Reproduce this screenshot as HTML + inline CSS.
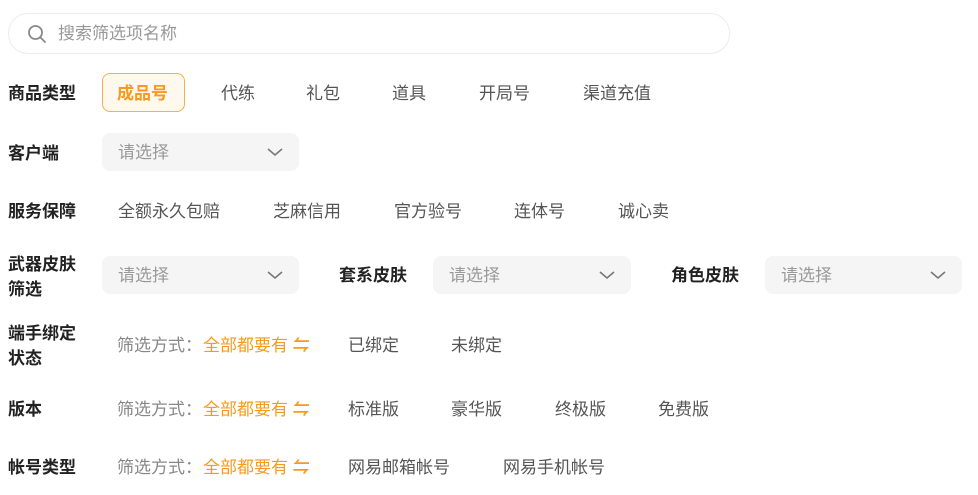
<!DOCTYPE html>
<html><head><meta charset="utf-8"><style>
body{margin:0;width:978px;height:495px;background:#fff;font-family:"Liberation Sans","Noto Sans CJK SC",sans-serif;font-size:17px;position:relative;overflow:hidden}
.a{position:absolute;white-space:nowrap;line-height:22px}
.l{font-weight:bold;color:#222}
.o{color:#555}
.p{color:#999}
.or{color:#f79a1e}
.or b{font-weight:bold}
.s{position:absolute;background:#f5f5f5;border-radius:8px;height:38px}
.s span{position:absolute;left:16px;top:9px;color:#999;line-height:22px}
.s svg{position:absolute;right:16px;top:13px}
</style></head><body>
<div style="position:absolute;left:8px;top:13px;width:720px;height:39px;border:1px solid #ececec;border-radius:20px"></div>
<svg style="position:absolute;left:27px;top:24px" width="20" height="20" viewBox="0 0 20 20"><circle cx="8.5" cy="8.5" r="6.5" fill="none" stroke="#888" stroke-width="1.8"/><path d="M13.5 13.5L18 18" stroke="#888" stroke-width="1.8" stroke-linecap="round"/></svg>
<div class="a p" style="left:58px;top:23px">搜索筛选项名称</div>

<div class="a l" style="left:8px;top:83px">商品类型</div>
<div style="position:absolute;left:102px;top:73px;width:81px;height:37px;border:1px solid #f5b04a;background:#fff8ef;border-radius:8px"></div>
<div class="a or" style="left:117px;top:83px;font-weight:bold">成品号</div>
<div class="a o" style="left:221px;top:83px">代练</div>
<div class="a o" style="left:306px;top:83px">礼包</div>
<div class="a o" style="left:392px;top:83px">道具</div>
<div class="a o" style="left:479px;top:83px">开局号</div>
<div class="a o" style="left:583px;top:83px">渠道充值</div>

<div class="a l" style="left:8px;top:143px">客户端</div>
<div class="s" style="left:102px;top:133px;width:197px"><span>请选择</span><svg width="16" height="12"><path d="M1 3l7 6 7-6" fill="none" stroke="#777" stroke-width="1.6"/></svg></div>

<div class="a l" style="left:8px;top:201px">服务保障</div>
<div class="a o" style="left:118px;top:201px">全额永久包赔</div>
<div class="a o" style="left:273px;top:201px">芝麻信用</div>
<div class="a o" style="left:394px;top:201px">官方验号</div>
<div class="a o" style="left:514px;top:201px">连体号</div>
<div class="a o" style="left:618px;top:201px">诚心卖</div>

<div class="a l" style="left:8px;top:252px;line-height:25px">武器皮肤<br>筛选</div>
<div class="s" style="left:102px;top:256px;width:197px"><span>请选择</span><svg width="16" height="12"><path d="M1 3l7 6 7-6" fill="none" stroke="#777" stroke-width="1.6"/></svg></div>
<div class="a l" style="left:339px;top:265px">套系皮肤</div>
<div class="s" style="left:433px;top:256px;width:198px"><span>请选择</span><svg width="16" height="12"><path d="M1 3l7 6 7-6" fill="none" stroke="#777" stroke-width="1.6"/></svg></div>
<div class="a l" style="left:671px;top:265px">角色皮肤</div>
<div class="s" style="left:765px;top:256px;width:197px"><span>请选择</span><svg width="16" height="12"><path d="M1 3l7 6 7-6" fill="none" stroke="#777" stroke-width="1.6"/></svg></div>

<div class="a l" style="left:8px;top:321px;line-height:25px">端手绑定<br>状态</div>
<div class="a p" style="left:117px;top:335px;color:#888">筛选方式：</div>
<div class="a or" style="left:203px;top:335px">全部都要有 <b>⇋</b></div>
<div class="a o" style="left:348px;top:335px">已绑定</div>
<div class="a o" style="left:451px;top:335px">未绑定</div>

<div class="a l" style="left:8px;top:399px">版本</div>
<div class="a p" style="left:117px;top:399px;color:#888">筛选方式：</div>
<div class="a or" style="left:203px;top:399px">全部都要有 <b>⇋</b></div>
<div class="a o" style="left:348px;top:399px">标准版</div>
<div class="a o" style="left:451px;top:399px">豪华版</div>
<div class="a o" style="left:555px;top:399px">终极版</div>
<div class="a o" style="left:658px;top:399px">免费版</div>

<div class="a l" style="left:8px;top:457px">帐号类型</div>
<div class="a p" style="left:117px;top:457px;color:#888">筛选方式：</div>
<div class="a or" style="left:203px;top:457px">全部都要有 <b>⇋</b></div>
<div class="a o" style="left:348px;top:457px">网易邮箱帐号</div>
<div class="a o" style="left:503px;top:457px">网易手机帐号</div>
</body></html>
